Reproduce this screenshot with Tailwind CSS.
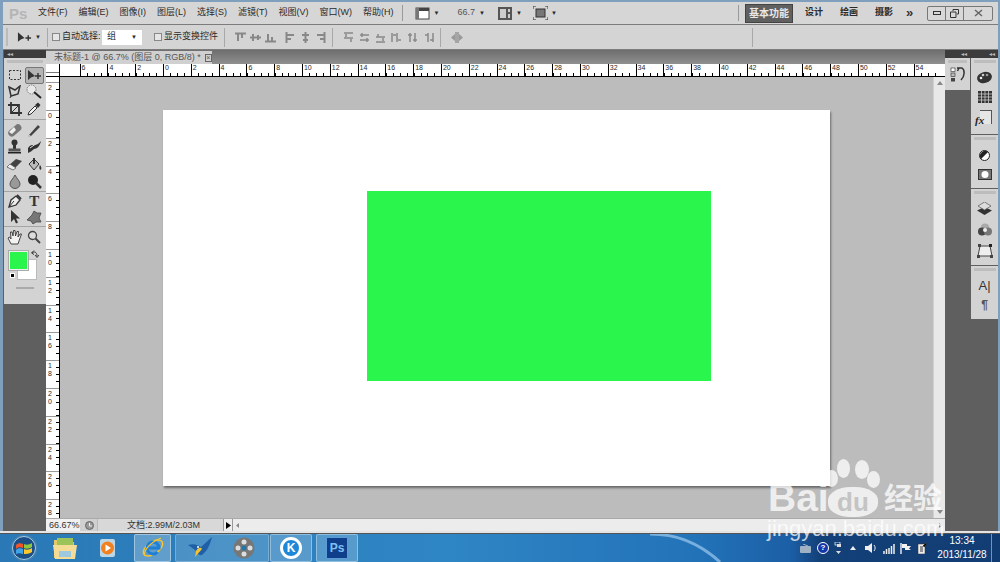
<!DOCTYPE html>
<html lang="zh">
<head>
<meta charset="utf-8">
<title>Photoshop</title>
<script src="https://cdn.jsdelivr.net/npm/@tailwindcss/browser@4"></script>
</head>
<body class="m-0 bg-black">
<div class="relative w-[1000px] h-[562px] overflow-hidden flex flex-col bg-[#7f9fbd] font-['Liberation_Sans','Noto_Sans_CJK_SC',sans-serif] text-[9px] text-[#2a2a2a]">

  <!-- title/menu bar -->
  <div class="mt-[2px] ml-[3px] mr-[2px] h-[22px] shrink-0 bg-[#d6d6d6] flex items-center relative">
    <span class="w-[35px] pl-[6px] text-[15px] text-[#b5b5b5] font-bold leading-none">Ps</span>
    <nav class="flex gap-[11px] whitespace-nowrap">
      <span>文件(F)</span><span>编辑(E)</span><span>图像(I)</span><span>图层(L)</span><span>选择(S)</span><span>滤镜(T)</span><span>视图(V)</span><span>窗口(W)</span><span>帮助(H)</span>
    </nav>
    <div class="ml-[8px] w-px h-[16px] bg-[#9a9a9a]"></div>
    <div class="ml-[12px] flex items-center gap-[4px]">
      <svg width="15" height="14" viewBox="0 0 15 14"><rect x="1" y="2" width="13" height="11" fill="#fff" stroke="#444"/><rect x="1" y="2" width="13" height="3" fill="#444"/><rect x="1" y="2" width="3" height="11" fill="#777"/></svg>
      <span class="text-[6px]">▼</span>
    </div>
    <span class="ml-[18px] text-[#555]">66.7</span>
    <span class="ml-[4px] text-[6px]">▼</span>
    <div class="ml-[13px] flex items-center gap-[4px]">
      <svg width="14" height="13" viewBox="0 0 14 13"><rect x="0" y="0" width="14" height="13" fill="#555"/><rect x="2" y="2" width="6" height="9" fill="#ccc"/><rect x="10" y="2" width="2" height="3" fill="#ccc"/><rect x="10" y="7" width="2" height="4" fill="#ccc"/></svg>
      <span class="text-[6px]">▼</span>
    </div>
    <div class="ml-[11px] flex items-center gap-[3px]">
      <svg width="15" height="14" viewBox="0 0 15 14"><rect x="3" y="3" width="9" height="8" fill="#777" stroke="#333"/><path d="M0 3V0H3M12 0H15V3M15 11V14H12M3 14H0V11" fill="none" stroke="#333"/></svg>
      <span class="text-[6px]">▼</span>
    </div>
    <div class="ml-auto flex items-center h-full whitespace-nowrap">
      <div class="w-px h-[16px] bg-[#9a9a9a] mr-[6px]"></div>
      <span class="w-[48px] h-[19px] bg-[#606060] border border-[#444] text-[#e8e8e8] font-bold text-[10px] flex items-center justify-center">基本功能</span>
      <span class="ml-[12px] w-[18px] font-bold">设计</span>
      <span class="ml-[17px] w-[18px] font-bold">绘画</span>
      <span class="ml-[17px] w-[18px] font-bold">摄影</span>
      <span class="ml-[13px] w-[15px] font-bold text-[13px] leading-none text-[#333] pb-[2px]">»</span>
      <div class="ml-[6px] mr-[5px] w-[66px] h-[15px] border border-[#777] rounded-[2px] flex items-stretch bg-[#d8d8d8]">
        <span class="w-[18px] border-r border-[#777] flex items-center justify-center"><span class="w-[8px] h-[4px] border border-[#333]"></span></span>
        <span class="w-[18px] border-r border-[#777] flex items-center justify-center"><svg width="9" height="9" viewBox="0 0 9 9"><path d="M3 2V.5H8.500V5H7M.5 3H6V8.500H.5Z" fill="none" stroke="#333"/></svg></span>
        <span class="flex-1 flex items-center justify-center"><svg width="9" height="8" viewBox="0 0 9 8"><path d="M1 1L8 7M8 1L1 7" stroke="#666" stroke-width="1.500"/></svg></span>
      </div>
    </div>
  </div>

  <!-- options bar -->
  <div class="ml-[3px] mr-[2px] h-[26px] shrink-0 bg-[#d4d4d4] border-y border-[#7c7c7c] flex items-center whitespace-nowrap">
    <div class="ml-[3px] w-[2px] h-[18px] bg-[#bbb]"></div>
    <svg class="ml-[9px]" width="15" height="11" viewBox="0 0 16 11"><path d="M1 0V10L4 7.500L8 6Z" fill="#333"/><path d="M12 3V9M9 6H15" stroke="#333" stroke-width="1.500"/></svg>
    <span class="ml-[3px] w-[6px] text-[6px]">▼</span>
    <div class="ml-[6px] w-px h-[19px] bg-[#a8a8a8]"></div>
    <span class="ml-[4px] w-[8px] h-[8px] border border-[#888] bg-[#e6e6e6]"></span>
    <span class="ml-[2px] w-[40px]">自动选择:</span>
    <div class="w-[40px] h-[15px] bg-white flex items-center justify-between px-[5px]"><span>组</span><span class="text-[6px]">▼</span></div>
    <span class="ml-[12px] w-[8px] h-[8px] border border-[#888] bg-[#e6e6e6]"></span>
    <span class="ml-[2px]">显示变换控件</span>
    <div class="ml-[6px] w-px h-[19px] bg-[#a8a8a8]"></div>
    <div class="ml-[10px] flex items-center gap-[4px]">
      <svg width="11" height="11" viewBox="0 0 11 11"><path d="M0 1.500H11M3 2V9M7 2V6" stroke="#888" stroke-width="2"/></svg>
      <svg width="11" height="11" viewBox="0 0 11 11"><path d="M0 5.500H11M3 2V9M8 3V8" stroke="#888" stroke-width="2"/></svg>
      <svg width="11" height="11" viewBox="0 0 11 11"><path d="M0 9.500H11M3 2V9M7 5V9" stroke="#888" stroke-width="2"/></svg>
      <span class="w-[1px]"></span>
      <svg width="11" height="11" viewBox="0 0 11 11"><path d="M1.500 0V11M2 3H9M2 7H6" stroke="#888" stroke-width="2"/></svg>
      <svg width="11" height="11" viewBox="0 0 11 11"><path d="M5.500 0V11M2 3H9M3 8H8" stroke="#888" stroke-width="2"/></svg>
      <svg width="11" height="11" viewBox="0 0 11 11"><path d="M9.500 0V11M2 3H9M5 7H9" stroke="#888" stroke-width="2"/></svg>
    </div>
    <div class="ml-[6px] w-px h-[19px] bg-[#a8a8a8]"></div>
    <div class="ml-[10px] flex items-center gap-[5px]">
      <svg width="11" height="11" viewBox="0 0 11 11"><path d="M1 1H10M1 6H10M3 2V5M8 7V10" stroke="#888" stroke-width="1.500"/></svg>
      <svg width="11" height="11" viewBox="0 0 11 11"><path d="M1 3H10M1 8H10M3 1V5M8 6V10" stroke="#888" stroke-width="1.500"/></svg>
      <svg width="11" height="11" viewBox="0 0 11 11"><path d="M1 5H10M1 10H10M3 2V5M8 6V9" stroke="#888" stroke-width="1.500"/></svg>
      <svg width="11" height="11" viewBox="0 0 11 11"><path d="M1 1V10M6 1V10M2 3H5M7 8H10" stroke="#888" stroke-width="1.500"/></svg>
      <svg width="11" height="11" viewBox="0 0 11 11"><path d="M3 1V10M8 1V10M1 3H5M6 8H10" stroke="#888" stroke-width="1.500"/></svg>
      <svg width="11" height="11" viewBox="0 0 11 11"><path d="M5 1V10M10 1V10M2 3H5M7 8H10" stroke="#888" stroke-width="1.500"/></svg>
    </div>
    <div class="ml-[6px] w-px h-[19px] bg-[#a8a8a8]"></div>
    <svg class="ml-[9px]" width="14" height="13" viewBox="0 0 14 13"><path d="M6 1V12M8 1V12" stroke="#777"/><path d="M5 3L1 6.500L5 10ZM9 3L13 6.500L9 10Z" fill="#999"/></svg>
    <div class="ml-[288px] w-px h-[19px] bg-[#a8a8a8]"></div>
  </div>

  <!-- workspace -->
  <div class="flex-1 min-h-0 ml-[3px] mr-[2px] flex bg-[#5f5f5f]">

    <!-- tools -->
    <aside class="w-[43px] shrink-0 flex flex-col pl-[1px]">
      <div class="h-[8px] bg-[#3c3c3c] flex items-center pl-[3px] gap-px">
        <span class="text-[#bbb] text-[6px] leading-none">◂◂</span>
      </div>
      <div class="h-[246px] bg-[#d3d3d3] flex flex-col">
        <div class="mx-[3px] mt-[2px] h-[3px] bg-[#bdbdbd]"></div>
        <div class="grid grid-cols-2 grid-rows-3 pl-[1px] pr-[2px] mt-[4px] h-[53px] border-b border-[#a5a5a5] pb-[2px] place-items-center">
          <svg width="14" height="14" viewBox="0 0 14 14"><rect x="1.500" y="2.500" width="11" height="9" fill="none" stroke="#333" stroke-dasharray="2 1.500"/></svg>
          <span class="w-[19px] h-[17px] bg-[#b4b4b4] border border-[#777] rounded-[2px] flex items-center justify-center"><svg width="15" height="11" viewBox="0 0 15 11"><path d="M1 0V10L4 7.500L8 6Z" fill="#333"/><path d="M11 3V9M8 6H14" stroke="#333" stroke-width="1.500"/></svg></span>
          <svg width="14" height="14" viewBox="0 0 14 14"><path d="M1 2L7 5L12 1L10 9L3 11Z" fill="none" stroke="#333" stroke-width="1.500"/><path d="M3 11L2 13" stroke="#333"/></svg>
          <svg width="16" height="15" viewBox="0 0 16 15"><circle cx="5.500" cy="5.500" r="4.500" fill="#e8e8e8" stroke="#777" stroke-dasharray="1.500 1"/><path d="M8 8L15 14" stroke="#222" stroke-width="2"/></svg>
          <svg width="14" height="14" viewBox="0 0 14 14"><path d="M3 0V11H14M0 3H11V14" fill="none" stroke="#333" stroke-width="1.800"/><path d="M4 10L10 4" stroke="#333"/></svg>
          <svg width="14" height="14" viewBox="0 0 14 14"><path d="M1 13L2 10L8 4L10 6L4 12Z" fill="#f4f4f4" stroke="#333"/><path d="M8 3L11 0.500L13.500 3L11 6Z" fill="#333"/></svg>
        </div>
        <div class="grid grid-cols-2 grid-rows-4 pl-[1px] pr-[2px] h-[72px] border-b border-[#a5a5a5] py-[1px] place-items-center">
          <svg width="15" height="14" viewBox="0 0 15 14"><rect x="0" y="4" width="15" height="7" rx="3.500" fill="#777" transform="rotate(-40 7.500 7)"/><path d="M2 9L7 4L9 7L5 11Z" fill="#eee"/></svg>
          <svg width="14" height="14" viewBox="0 0 14 14"><path d="M2 12L11 2L13 4L4 13L1 14Z" fill="#444"/><path d="M2 12L1 14L4 13Z" fill="#eee"/></svg>
          <svg width="15" height="15" viewBox="0 0 15 15"><circle cx="7.500" cy="3.500" r="3" fill="#333"/><rect x="6" y="5" width="3" height="5" fill="#333"/><rect x="1.500" y="9.500" width="12" height="3" fill="#555"/><rect x="1" y="13" width="13" height="1.500" fill="#222"/></svg>
          <svg width="15" height="14" viewBox="0 0 15 14"><path d="M1 8C5 2 9 8 14 1C13 6 10 9 7 9C5 11 3 12 1 13Z" fill="#333"/><path d="M3 8L10 3" stroke="#ddd"/></svg>
          <svg width="15" height="13" viewBox="0 0 15 13"><path d="M0 9L9 1L15 3L6 12Z" fill="#444"/><path d="M0 9L3 6L9 10L6 12Z" fill="#eee" stroke="#444" stroke-width=".6"/></svg>
          <svg width="15" height="15" viewBox="0 0 15 15"><path d="M2 7L7 2L12 7L7 13Z" fill="#bbb" stroke="#333"/><path d="M6 1H8V7H6Z" fill="#333"/><path d="M13 8C14.500 10 15 12 13.500 13C12 12 12 10 13 8Z" fill="#333"/></svg>
          <svg width="12" height="15" viewBox="0 0 12 15"><path d="M6 1C8 5 11 7 11 10A5 4.500 0 0 1 1 10C1 7 4 5 6 1Z" fill="#999" stroke="#555"/></svg>
          <svg width="15" height="15" viewBox="0 0 15 15"><circle cx="6" cy="6" r="5" fill="#222"/><path d="M9 9L14 14" stroke="#333" stroke-width="2.500"/></svg>
        </div>
        <div class="grid grid-cols-2 grid-rows-2 pl-[1px] pr-[2px] h-[35px] border-b border-[#a5a5a5] py-[1px] place-items-center">
          <svg width="14" height="14" viewBox="0 0 14 14"><path d="M1 13L3 6L8 2L12 6L8 11Z" fill="#eee" stroke="#333" stroke-width="1.300"/><path d="M1 13L6 7" stroke="#333"/><path d="M9 1L13 5" stroke="#333" stroke-width="2"/></svg>
          <span class="font-['Liberation_Serif'] font-bold text-[15px] leading-none text-[#333]">T</span>
          <svg width="12" height="14" viewBox="0 0 12 14"><path d="M2 0V12L5 9L7 13.500L9 12.500L7 8.500H11Z" fill="#333"/></svg>
          <svg width="16" height="15" viewBox="0 0 16 15"><path d="M1 10L6 5L8 1L11 3L15 3L13 8L15 12L10 12L7 14L5 11Z" fill="#777" stroke="#444" stroke-width=".8"/></svg>
        </div>
        <div class="grid grid-cols-2 pl-[1px] pr-[2px] h-[19px] py-[1px] place-items-center">
          <svg width="16" height="16" viewBox="0 0 16 16"><path d="M4 15L1 9L2.500 8L4 10L3.500 3L5 3L6 7L6.500 1.500H8L8.500 7L10 2.500H11.500L11 8L13 5H14.500L12 12L11 15Z" fill="#f2f2f2" stroke="#333" stroke-width=".9"/></svg>
          <svg width="14" height="14" viewBox="0 0 14 14"><circle cx="5.500" cy="5.500" r="4" fill="#ddd" stroke="#444" stroke-width="1.300"/><path d="M8.500 8.500L13 13" stroke="#444" stroke-width="2"/></svg>
        </div>
        <div class="relative h-[40px] mt-[5px]">
          <div class="absolute left-[13px] top-[8px] w-[20px] h-[21px] bg-white border border-[#bbb]"></div>
          <div class="absolute left-[5px] top-0 w-[19px] h-[19px] bg-[#2af54c] border border-[#eee] outline outline-[#aaa]"></div>
          <svg class="absolute left-[27px] top-[-1px]" width="8" height="8" viewBox="0 0 8 8"><path d="M1 3C3 1 6 2 6 6M4 5L6 7.500L8 5M3 0.500L0.500 3L3 4.500" fill="none" stroke="#333"/></svg>
          <div class="absolute left-[6px] top-[22px] w-[5px] h-[5px] bg-black border border-white"></div>
        </div>
        <div class="mx-[12px] mt-[-4px] h-[2px] bg-[#aaa]"></div>
      </div>
    </aside>

    <!-- document column -->
    <main class="w-[899px] shrink-0 flex flex-col bg-[#bcbcbc]">
      <!-- tabs -->
      <div class="h-[14px] shrink-0 bg-gradient-to-b from-[#6e6e6e] to-[#8f8f8f] flex items-end">
        <div class="w-[166px] h-[13px] bg-[#d0d0d0] flex items-center pl-[8px] whitespace-nowrap text-[9px] text-[#555]">
          <span>未标题-1 @ 66.7% (图层 0, RGB/8) *</span>
          <span class="ml-[4px] w-[8px] h-[8px] border border-[#666] flex items-center justify-center text-[7px] leading-none">×</span>
        </div>
      </div>
      <!-- ruler top -->
      <div class="h-[13px] shrink-0 flex bg-white border-b border-black overflow-hidden text-[7px] leading-none">
        <div class="w-[14px] shrink-0 bg-white border-r border-black relative"><span class="block mt-[8px] h-px bg-[#777]"></span></div>
        <div class="w-[19.600px] shrink-0"></div>
        <div class="flex bg-[repeating-linear-gradient(90deg,#000_0,#000_1px,transparent_1px,transparent_6.950px)] bg-no-repeat bg-bottom bg-[size:100%_3px]">
          <span class="w-[27.800px] shrink-0 border-l border-black pl-px h-full">6</span>
          <span class="w-[27.800px] shrink-0 border-l border-black pl-px h-full">4</span>
          <span class="w-[27.800px] shrink-0 border-l border-black pl-px h-full">2</span>
          <span class="w-[27.800px] shrink-0 border-l border-black pl-px h-full">0</span>
          <span class="w-[27.800px] shrink-0 border-l border-black pl-px h-full">2</span>
          <span class="w-[27.800px] shrink-0 border-l border-black pl-px h-full">4</span>
          <span class="w-[27.800px] shrink-0 border-l border-black pl-px h-full">6</span>
          <span class="w-[27.800px] shrink-0 border-l border-black pl-px h-full">8</span>
          <span class="w-[27.800px] shrink-0 border-l border-black pl-px h-full">10</span>
          <span class="w-[27.800px] shrink-0 border-l border-black pl-px h-full">12</span>
          <span class="w-[27.800px] shrink-0 border-l border-black pl-px h-full">14</span>
          <span class="w-[27.800px] shrink-0 border-l border-black pl-px h-full">16</span>
          <span class="w-[27.800px] shrink-0 border-l border-black pl-px h-full">18</span>
          <span class="w-[27.800px] shrink-0 border-l border-black pl-px h-full">20</span>
          <span class="w-[27.800px] shrink-0 border-l border-black pl-px h-full">22</span>
          <span class="w-[27.800px] shrink-0 border-l border-black pl-px h-full">24</span>
          <span class="w-[27.800px] shrink-0 border-l border-black pl-px h-full">26</span>
          <span class="w-[27.800px] shrink-0 border-l border-black pl-px h-full">28</span>
          <span class="w-[27.800px] shrink-0 border-l border-black pl-px h-full">30</span>
          <span class="w-[27.800px] shrink-0 border-l border-black pl-px h-full">32</span>
          <span class="w-[27.800px] shrink-0 border-l border-black pl-px h-full">34</span>
          <span class="w-[27.800px] shrink-0 border-l border-black pl-px h-full">36</span>
          <span class="w-[27.800px] shrink-0 border-l border-black pl-px h-full">38</span>
          <span class="w-[27.800px] shrink-0 border-l border-black pl-px h-full">40</span>
          <span class="w-[27.800px] shrink-0 border-l border-black pl-px h-full">42</span>
          <span class="w-[27.800px] shrink-0 border-l border-black pl-px h-full">44</span>
          <span class="w-[27.800px] shrink-0 border-l border-black pl-px h-full">46</span>
          <span class="w-[27.800px] shrink-0 border-l border-black pl-px h-full">48</span>
          <span class="w-[27.800px] shrink-0 border-l border-black pl-px h-full">50</span>
          <span class="w-[27.800px] shrink-0 border-l border-black pl-px h-full">52</span>
          <span class="w-[27.800px] shrink-0 border-l border-black pl-px h-full">54</span>
        </div>
      </div>
      <!-- middle -->
      <div class="flex-1 min-h-0 flex">
        <!-- ruler left -->
        <div class="w-[14px] shrink-0 bg-white border-r border-black overflow-hidden text-[7px] leading-[8px] flex flex-col">
          <div class="h-[5.200px] shrink-0"></div>
          <div class="bg-[repeating-linear-gradient(180deg,#000_0,#000_1px,transparent_1px,transparent_6.950px)] bg-no-repeat bg-right bg-[size:3px_100%]">
            <span class="block h-[27.800px] border-t border-[#999] pl-[2px] pt-px">2</span>
            <span class="block h-[27.800px] border-t border-[#999] pl-[2px] pt-px">0</span>
            <span class="block h-[27.800px] border-t border-[#999] pl-[2px] pt-px">2</span>
            <span class="block h-[27.800px] border-t border-[#999] pl-[2px] pt-px">4</span>
            <span class="block h-[27.800px] border-t border-[#999] pl-[2px] pt-px">6</span>
            <span class="block h-[27.800px] border-t border-[#999] pl-[2px] pt-px">8</span>
            <span class="block h-[27.800px] border-t border-[#999] pl-[2px] pt-px">1<br>0</span>
            <span class="block h-[27.800px] border-t border-[#999] pl-[2px] pt-px">1<br>2</span>
            <span class="block h-[27.800px] border-t border-[#999] pl-[2px] pt-px">1<br>4</span>
            <span class="block h-[27.800px] border-t border-[#999] pl-[2px] pt-px">1<br>6</span>
            <span class="block h-[27.800px] border-t border-[#999] pl-[2px] pt-px">1<br>8</span>
            <span class="block h-[27.800px] border-t border-[#999] pl-[2px] pt-px">2<br>0</span>
            <span class="block h-[27.800px] border-t border-[#999] pl-[2px] pt-px">2<br>2</span>
            <span class="block h-[27.800px] border-t border-[#999] pl-[2px] pt-px">2<br>4</span>
            <span class="block h-[27.800px] border-t border-[#999] pl-[2px] pt-px">2<br>6</span>
            <span class="block h-[27.800px] border-t border-[#999] pl-[2px] pt-px">2<br>8</span>
          </div>
        </div>
        <!-- canvas pasteboard -->
        <div class="flex-1 pl-[103px] pt-[33px] bg-[#bcbcbc]">
          <div class="w-[667px] h-[376px] bg-white shadow-[1px_2px_2px_#6a6a6a] pl-[204px] pt-[81px]">
            <div class="w-[344px] h-[190px] bg-[#2af54c]"></div>
          </div>
        </div>
        <!-- vscroll -->
        <div class="w-[12px] shrink-0 bg-[#e8e8e8] border-l border-[#cfcfcf] flex flex-col items-center justify-between py-[4px]">
          <svg width="6" height="4" viewBox="0 0 6 4"><path d="M0 4L3 0L6 4Z" fill="#888"/></svg>
          <svg width="6" height="4" viewBox="0 0 6 4"><path d="M0 0L3 4L6 0Z" fill="#888"/></svg>
        </div>
      </div>
      <!-- status -->
      <div class="h-[13px] shrink-0 flex bg-[#d0d0d0] border-t border-[#aaa] whitespace-nowrap">
        <span class="w-[34px] bg-[#f1f1f1] pl-[3px] leading-[12px] text-[#333]">66.67%</span>
        <span class="ml-[5px] w-[10px] flex items-center"><svg width="9" height="9" viewBox="0 0 9 9"><circle cx="4.500" cy="4.500" r="4" fill="#999" stroke="#666"/><path d="M4.500 2V5H7" stroke="#eee" fill="none"/></svg></span>
        <span class="ml-[2px] w-[126px] bg-[#d8d8d8] border-l border-[#bbb] pl-[29px] leading-[12px] text-[#333]">文档:2.99M/2.03M</span>
        <span class="w-[10px] bg-[#eee] border-x border-[#999] flex items-center justify-center"><svg width="5" height="7" viewBox="0 0 5 7"><path d="M0 0L5 3.500L0 7Z" fill="#000"/></svg></span>
        <div class="flex-1 bg-[#ececec] flex justify-between items-center px-[3px]">
          <svg width="3" height="5" viewBox="0 0 3 5"><path d="M3 0L0 2.500L3 5Z" fill="#888"/></svg>
          <svg width="3" height="5" viewBox="0 0 3 5"><path d="M0 0L3 2.500L0 5Z" fill="#888"/></svg>
        </div>
      </div>
    </main>

    <!-- right dock -->
    <aside class="flex-1 flex flex-col">
      <div class="h-[8px] bg-[#3c3c3c] flex text-[#bbb] text-[6px] leading-[8px]">
        <span class="w-[25px] text-right pr-[3px]">◂◂</span><span class="flex-1 text-right pr-[3px]">◂◂</span>
      </div>
      <div class="flex-1 flex gap-px">
        <div class="w-[25px] h-[32px] bg-[#d3d3d3]">
          <div class="mx-[3px] mt-[2px] h-[3px] bg-[#bdbdbd]"></div>
          <div class="flex justify-center mt-[4px]">
            <svg width="16" height="15" viewBox="0 0 16 15"><rect x="1" y="1" width="4" height="3.500" fill="#fff" stroke="#444" stroke-width=".7"/><rect x="1" y="6" width="4" height="3.500" fill="#bbb" stroke="#444" stroke-width=".7"/><rect x="1" y="11" width="4" height="3.500" fill="#444"/><path d="M7 1H12C15 3 15 9 11 13M9 1L7.500 4" fill="none" stroke="#333" stroke-width="1.500"/></svg>
          </div>
        </div>
        <div class="flex-1 flex flex-col gap-px">
          <div class="h-[76px] bg-[#d3d3d3] flex flex-col items-center gap-[7px]">
            <div class="w-[22px] mt-[2px] h-[3px] bg-[#bdbdbd] mb-[1px]"></div>
            <svg width="15" height="13" viewBox="0 0 15 13"><ellipse cx="7.500" cy="6.500" rx="7.500" ry="5.500" fill="#333" transform="rotate(-15 7.500 6.500)"/><circle cx="6" cy="4" r="1.300" fill="#ccc"/><circle cx="10" cy="4" r="1.300" fill="#999"/><circle cx="4" cy="7" r="1.300" fill="#eee"/></svg>
            <svg width="14" height="12" viewBox="0 0 14 12"><rect width="14" height="12" fill="#333"/><path d="M0 3H14M0 6H14M0 9H14M3.500 0V12M7 0V12M10.500 0V12" stroke="#ccc" stroke-width=".8"/></svg>
            <span class="relative block ml-[3px] w-[12px] h-[14px] border-t border-r border-[#555] bg-[#e6e6e6] font-['Liberation_Serif'] italic font-bold text-[11px] leading-[15px] text-[#222]"><span class="absolute left-[-5px] top-[2px]">fx</span></span>
          </div>
          <div class="h-[53px] bg-[#d3d3d3] flex flex-col items-center gap-[8px]">
            <div class="w-[22px] mt-[2px] h-[3px] bg-[#bdbdbd] mb-[2px]"></div>
            <svg width="11" height="11" viewBox="0 0 11 11"><circle cx="5.500" cy="5.500" r="5" fill="#fff" stroke="#222"/><path d="M9 2A5 5 0 0 0 2 9Z" fill="#222"/></svg>
            <svg width="14" height="11" viewBox="0 0 14 11"><rect x=".5" y=".5" width="13" height="10" fill="#777" stroke="#333"/><circle cx="7" cy="5.500" r="3.500" fill="#fff"/></svg>
          </div>
          <div class="h-[76px] bg-[#d3d3d3] flex flex-col items-center gap-[8px]">
            <div class="w-[22px] mt-[2px] h-[3px] bg-[#bdbdbd]"></div>
            <svg width="15" height="13" viewBox="0 0 15 13"><path d="M7.500 5L15 8.500L7.500 13L0 8.500Z" fill="#333"/><path d="M7.500 0L14 4L7.500 8L1 4Z" fill="#ddd" stroke="#555" stroke-width=".7"/></svg>
            <svg width="14" height="13" viewBox="0 0 14 13"><circle cx="7" cy="4.500" r="4" fill="#aaa"/><circle cx="4" cy="8.500" r="4" fill="#444"/><circle cx="10" cy="8.500" r="4" fill="#777"/><circle cx="7" cy="7" r="2" fill="#eee"/></svg>
            <svg width="16" height="14" viewBox="0 0 16 14"><path d="M3 2H13L15 12H1Z" fill="#eee" stroke="#444"/><rect x="1" y="0" width="3" height="3" fill="#444"/><rect x="12" y="0" width="3" height="3" fill="#222"/><rect x="0" y="11" width="3" height="3" fill="#444"/><rect x="13" y="11" width="3" height="3" fill="#444"/></svg>
          </div>
          <div class="h-[53px] bg-[#d3d3d3] flex flex-col items-center gap-[6px]">
            <div class="w-[22px] mt-[2px] h-[3px] bg-[#bdbdbd] mb-[1px]"></div>
            <span class="text-[13px] leading-[15px] text-[#333]">A|</span>
            <span class="text-[12px] leading-[13px] font-bold text-[#555]">¶</span>
          </div>
        </div>
      </div>
    </aside>
  </div>

  <!-- window bottom edge -->
  <div class="h-[3px] shrink-0 bg-[#e4e4e4] border-b border-[#555]"></div>

  <!-- taskbar -->
  <footer class="h-[28px] shrink-0 bg-[linear-gradient(90deg,#2a79b6_0%,#2f86c4_45%,#2272b8_70%,#1c5fa6_79%,#134078_82%,#123c74_100%)] flex items-center relative">
    <svg class="absolute left-[650px] top-0" width="74" height="28" viewBox="0 0 74 28"><path d="M0 0C26 0 48 8 70 28" fill="none" stroke="#9cc9ee" stroke-width="3" opacity=".7"/></svg>
    <svg class="ml-[10px] relative" width="28" height="28" viewBox="0 0 28 28"><circle cx="14" cy="14" r="13.500" fill="#3f7fb0"/><circle cx="14" cy="14" r="11.500" fill="#1c4f86" stroke="#a8cde6"/><path d="M6 11C8 9 10 9 13 10V14C10 13 8 13 6 15Z" fill="#f0562a"/><path d="M14 10C16 11 19 11 22 9V13C19 15 16 15 14 14Z" fill="#8cc63f"/><path d="M6 16C8 14 10 14 13 15V20C10 19 8 19 6 20Z" fill="#3fa3ea"/><path d="M14 15C16 16 19 16 22 14V18C19 20 16 20 14 20Z" fill="#fbc62e"/></svg>
    <svg class="ml-[14px] relative" width="26" height="24" viewBox="0 0 26 24"><path d="M2 4H10L12 6H22V22H2Z" fill="#e7c768"/><rect x="5" y="2" width="16" height="8" fill="#9cc25a"/><path d="M1 9H25L23 23H3Z" fill="#f4dc94"/><rect x="7" y="15" width="12" height="6" fill="#9cc8e0"/></svg>
    <svg class="ml-[21px] relative" width="20" height="20" viewBox="0 0 20 20"><rect x="1" y="1" width="15" height="18" rx="2" fill="#bcd6e6"/><circle cx="8.500" cy="10" r="6.500" fill="#f08020"/><path d="M6.500 6.500L12 10L6.500 13.500Z" fill="#fff"/></svg>
    <div class="ml-[15px] w-[37px] h-[28px] bg-white/25 border border-white/40 rounded-[2px] flex items-center justify-center relative">
      <svg width="24" height="24" viewBox="0 0 24 24"><ellipse cx="12" cy="12" rx="11" ry="6" fill="none" stroke="#f5c430" stroke-width="1.500" transform="rotate(-35 12 12)"/><path d="M6 12H18A6 6 0 1 0 16.500 16" fill="none" stroke="#1f7fd6" stroke-width="3"/><path d="M4 20C2 17 6 8 20 2" fill="none" stroke="#f5c430" stroke-width="1.200"/></svg>
    </div>
    <div class="ml-[4px] w-[94px] h-[28px] bg-white/15 border border-white/25 rounded-[2px] flex items-center relative">
      <svg class="ml-[12px]" width="26" height="22" viewBox="0 0 26 22"><path d="M0 8C6 6 10 8 13 10L24 0C22 8 19 14 16 16C13 20 10 18 8 14C6 12 3 10 0 8Z" fill="#1f5fa8"/><path d="M8 14C10 10 13 10 14 12L7 20Z" fill="#f2c230"/><circle cx="10" cy="10" r="1" fill="#fff"/></svg>
      <svg class="ml-[19px]" width="22" height="22" viewBox="0 0 22 22"><circle cx="11" cy="11" r="10.500" fill="#777"/><circle cx="11" cy="5" r="2.500" fill="#ddd"/><circle cx="11" cy="17" r="2.500" fill="#ddd"/><circle cx="5" cy="11" r="2.500" fill="#ddd"/><circle cx="17" cy="11" r="2.500" fill="#ddd"/><circle cx="11" cy="11" r="2.500" fill="#27a"/></svg>
    </div>
    <div class="ml-[1px] w-[42px] h-[28px] bg-white/20 border border-white/35 rounded-[2px] flex items-center justify-center relative">
      <span class="w-[22px] h-[22px] rounded-full bg-[#1e88d8] border-[3px] border-white text-white font-bold text-[12px] flex items-center justify-center leading-none">K</span>
    </div>
    <div class="ml-[4px] w-[42px] h-[28px] bg-white/20 border border-white/35 rounded-[2px] flex items-center justify-center relative">
      <span class="w-[22px] h-[22px] bg-[#0f3f8a] border border-[#5d9ad8] text-[#7fc0f4] font-bold text-[12px] flex items-center justify-center leading-none">Ps</span>
    </div>
    <div class="ml-auto flex items-center text-white relative">
      <svg width="11" height="9" viewBox="0 0 11 9"><rect y="2" width="11" height="7" rx="1" fill="#9fb2c4"/><path d="M3 0L8 2" stroke="#9fb2c4"/></svg>
      <span class="ml-[6px] w-[12px] h-[12px] rounded-full bg-[#1436a8] border border-white text-[8px] font-bold flex items-center justify-center leading-none">?</span>
      <svg class="ml-[5px]" width="8" height="13" viewBox="0 0 8 13"><rect x="1" y="0" width="5" height="3" fill="none" stroke="#fff" stroke-width=".7"/><rect x="3" y="2" width="4" height="3" fill="#ddd"/><path d="M2 9H7L4.500 12Z" fill="#ddd"/></svg>
      <svg class="ml-[8px]" width="6" height="4" viewBox="0 0 6 4"><path d="M0 4L3 0L6 4Z" fill="#eee"/></svg>
      <svg class="ml-[9px]" width="12" height="12" viewBox="0 0 12 12"><path d="M0 4H3L7 1V11L3 8H0Z" fill="#eee"/><path d="M9 3C10.500 5 10.500 7 9 9" stroke="#eee" fill="none"/></svg>
      <svg class="ml-[6px]" width="12" height="11" viewBox="0 0 12 11"><path d="M1 8V11M3.500 6V11M6 5V11M8.500 3V11M11 1V11" stroke="#eee" stroke-width="1.500"/></svg>
      <svg class="ml-[5px]" width="11" height="11" viewBox="0 0 11 11"><path d="M1 0V11" stroke="#fff" stroke-width="1.300"/><path d="M2 1H7V3H11L9 5.500L11 7H5V5H2Z" fill="#f2f2f2"/></svg>
      <svg class="ml-[6px]" width="11" height="12" viewBox="0 0 11 12"><rect x="1" y="2" width="7" height="10" fill="#eee" stroke="#333" stroke-width=".5"/><path d="M6 4L9 1L10 2L7 5M3 5H6M3 7H6M3 9H6" stroke="#333"/></svg>
      <div class="ml-[9px] w-[50px] flex flex-col items-center text-[10px] leading-[14px] whitespace-nowrap"><span>13:34</span><span>2013/11/28</span></div>
      <div class="ml-[4px] mr-0 w-[9px] h-[28px] bg-[#0f3a72] border-l border-[#6f95bf]"></div>
    </div>
  </footer>

  <!-- watermark -->
  <div class="absolute left-[764px] top-[460px] w-[190px] h-[82px] text-white/75 pointer-events-none">
    <span class="absolute left-[4px] top-[16px] text-[39px] leading-[44px] font-bold tracking-[0px] whitespace-nowrap">Bai</span>
    <span class="absolute left-[61px] top-[10px] w-[13px] h-[17px] rounded-[50%] bg-white/75"></span>
    <span class="absolute left-[73px] top-[-1px] w-[13px] h-[19px] rounded-[50%] bg-white/75"></span>
    <span class="absolute left-[91px] top-0 w-[14px] h-[19px] rounded-[50%] bg-white/75"></span>
    <span class="absolute left-[103px] top-[11px] w-[13px] h-[17px] rounded-[50%] bg-white/75"></span>
    <span class="absolute left-[64px] top-[27px] w-[50px] h-[30px] rounded-[45%] bg-white/75 text-[#c4c4c4] text-[26px] leading-[30px] font-bold text-center">du</span>
    <span class="absolute left-[120px] top-[21px] text-[29px] leading-[36px] font-bold whitespace-nowrap">经验</span>
    <span class="absolute left-[3px] top-[57px] text-[22px] leading-[24px] whitespace-nowrap">jingyan.baidu.com</span>
  </div>
</div>
</body>
</html>
